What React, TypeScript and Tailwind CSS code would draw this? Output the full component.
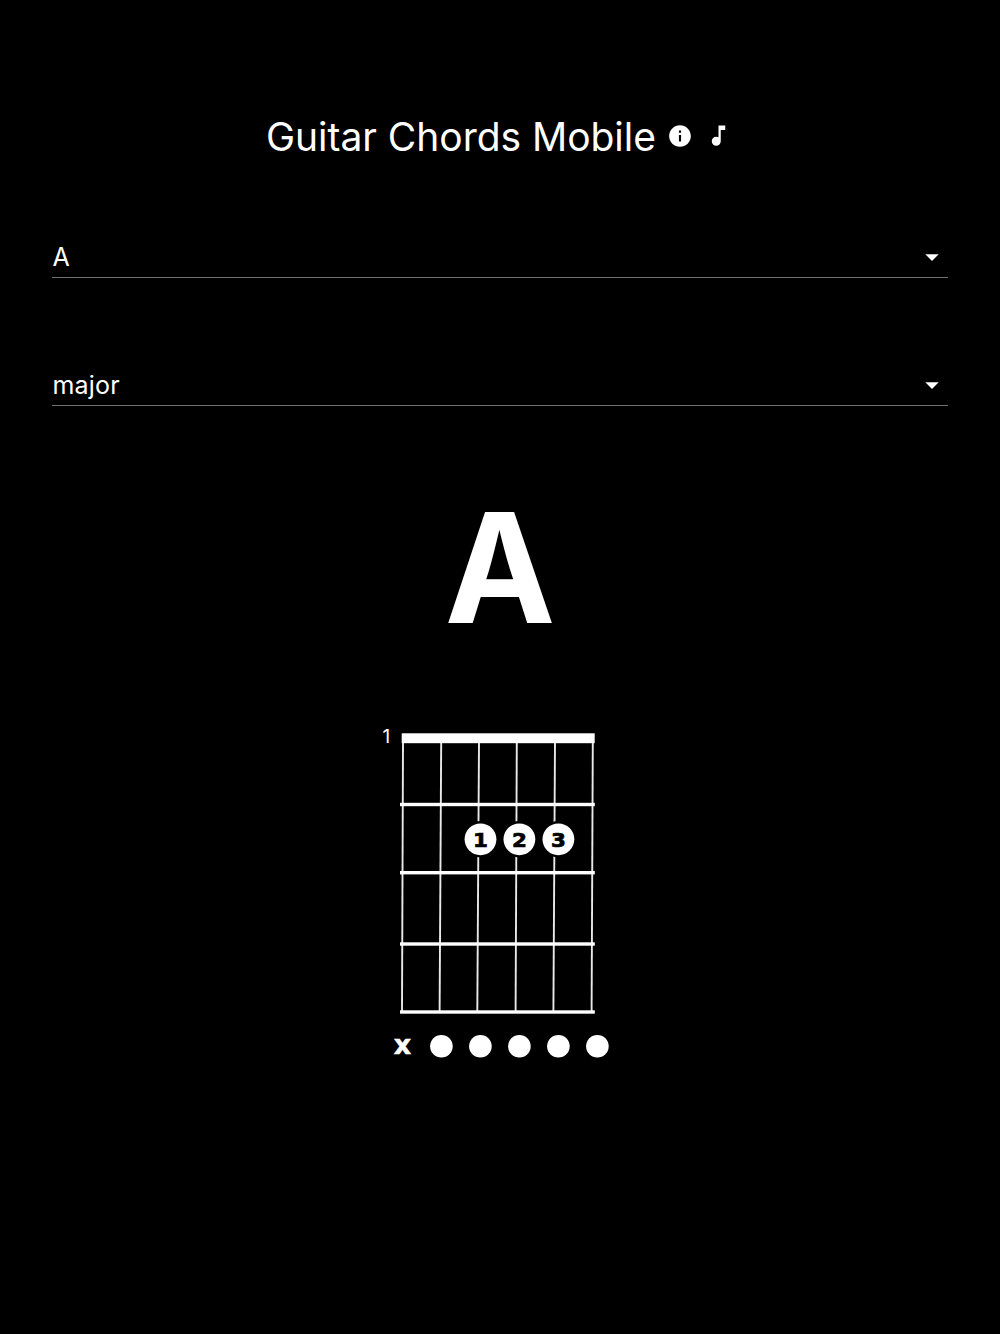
import { MdInfo, MdMusicNote, MdArrowDropDown } from 'react-icons/md';

const STRINGS = [
  { top: 403, bottom: 402 },
  { top: 441.2, bottom: 439.6 },
  { top: 479, bottom: 477.3 },
  { top: 516.8, bottom: 515.6 },
  { top: 555, bottom: 553.4 },
  { top: 592.8, bottom: 591.6 },
];
const FRETS = [804.5, 872.7, 944, 1012];
const FINGERS = [
  { x: 480.5, label: '1' },
  { x: 519.4, label: '2' },
  { x: 558.4, label: '3' },
];
const OPEN_STRINGS = [441.4, 480.4, 519.4, 558.4, 597.4];

function Header() {
  return (
    <header className="flex h-[62px] items-center pl-[266px]">
      <h1 className="w-[402px] whitespace-nowrap text-[39px] leading-[62px] tracking-[-0.04px]">
        Guitar Chords Mobile
      </h1>
      <MdInfo className="mb-[2px] h-[26px] w-[26px] -translate-x-[1px]" />
      <MdMusicNote className="mb-[3px] ml-[11px] h-[27px] w-[27px]" />
    </header>
  );
}

function Select({ value }: { value: string }) {
  return (
    <button
      type="button"
      className="mx-[52px] flex h-[42px] w-[896px] items-center justify-between border-b border-[#707070] text-left text-[25px] tracking-[0.2px]"
    >
      <span className="pt-[2px] pl-[0.5px]">{value}</span>
      <MdArrowDropDown className="h-8 w-8" />
    </button>
  );
}

function ChordDiagram() {
  return (
    <svg
      className="ml-[370px] block h-[350px] w-[250px] fill-white"
      viewBox="370 720 250 350"
    >
      <text x="382.5" y="743" className="font-['Inter',sans-serif] text-[19px]">
        1
      </text>
      {STRINGS.map((s) => (
        <line
          key={s.top}
          x1={s.top}
          y1="742"
          x2={s.bottom}
          y2="1012"
          stroke="#e8e8e8"
          strokeWidth="1.9"
        />
      ))}
      {FRETS.map((y) => (
        <rect key={y} x="400" y={y - 1.7} width="194.8" height="3.4" />
      ))}
      <rect x="401.7" y="733.3" width="193" height="9.9" />
      {FINGERS.map((f) => (
        <g key={f.label} transform={`translate(${f.x} 839.3)`}>
          <circle r="18.2" fill="#000" />
          <circle r="15.9" />
          <text
            y="7.3"
            textAnchor="middle"
            transform="scale(1.07 1)"
            stroke="#000"
            strokeWidth="0.7"
            className="fill-black font-['DejaVu_Sans',sans-serif] text-[20px] font-bold"
          >
            {f.label}
          </text>
        </g>
      ))}
      <text
        x="402.4"
        y="1053.7"
        textAnchor="middle"
        stroke="#fff"
        strokeWidth="0.5"
        className="font-['DejaVu_Sans',sans-serif] text-[27px] font-bold"
      >
        x
      </text>
      {OPEN_STRINGS.map((x) => (
        <circle key={x} cx={x} cy="1046.2" r="11.3" />
      ))}
    </svg>
  );
}

export default function App() {
  return (
    <main className="flex h-[1334px] w-[1000px] flex-col bg-black pt-[106px] font-['Inter',sans-serif] text-white">
      <Header />
      <div className="mt-[68px] flex flex-col gap-[86px]">
        <Select value="A" />
        <Select value="major" />
      </div>
      <h2 className="mt-[87px] h-[150px] scale-x-[0.975] text-center text-[152px] leading-[150px] font-bold">
        A
      </h2>
      <div className="mt-[77px]">
        <ChordDiagram />
      </div>
    </main>
  );
}
